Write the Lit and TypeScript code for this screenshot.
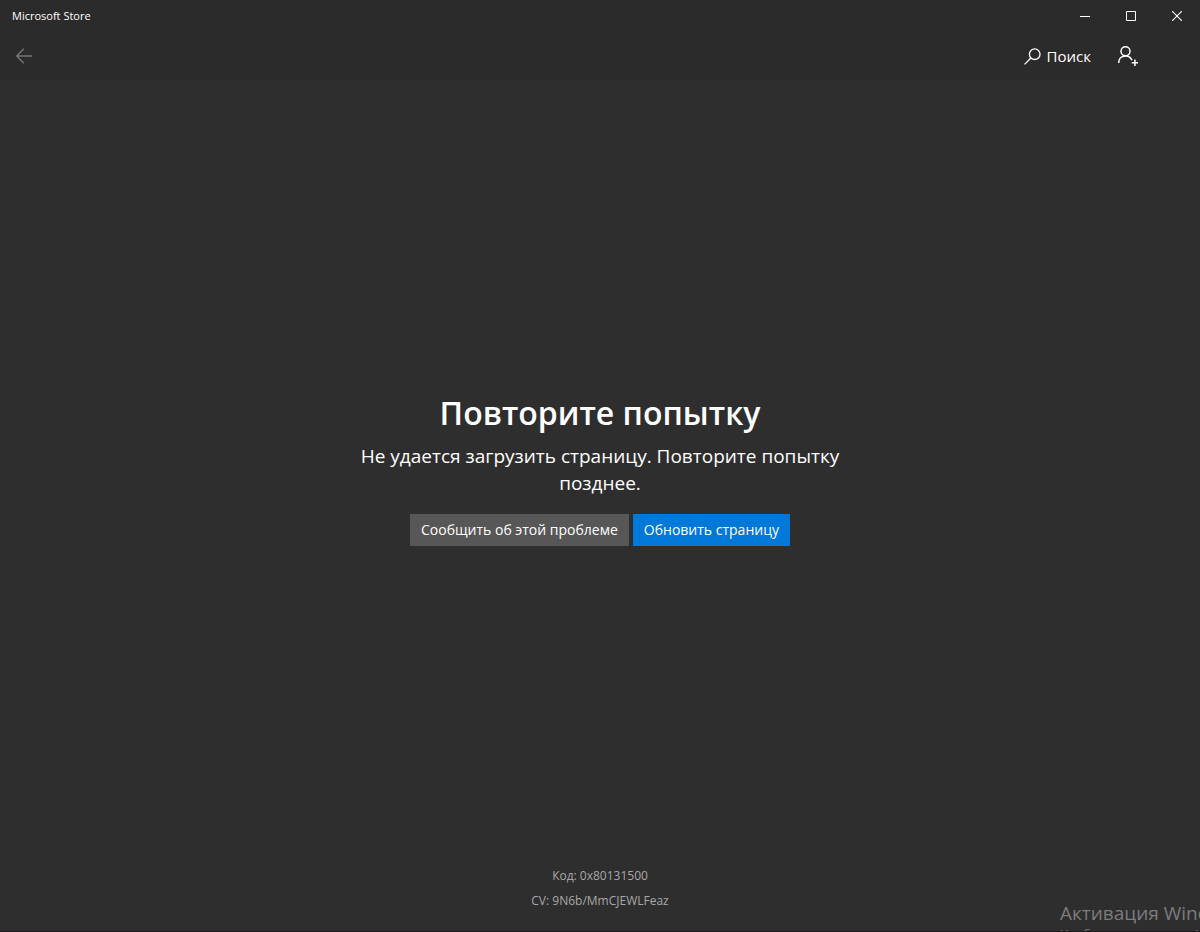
import { LitElement, html, css } from "lit";
import { customElement } from "lit/decorators.js";

@customElement("store-header")
class StoreHeader extends LitElement {
  static styles = css`
    :host {
      display: block;
      background: #2b2b2b;
    }
    .titlebar {
      display: flex;
      align-items: center;
      justify-content: space-between;
      height: 32px;
      padding-left: 12px;
      font-size: 11px;
      line-height: 16px;
    }
    .window-controls {
      display: flex;
    }
    .toolbar {
      display: flex;
      align-items: center;
      justify-content: space-between;
      height: 48px;
      padding-right: 48px;
    }
    .actions {
      display: flex;
      align-items: center;
    }
    button {
      display: flex;
      align-items: center;
      justify-content: center;
      margin: 0;
      padding: 0;
      border: 0;
      background: transparent;
      color: #fff;
      font: inherit;
    }
    svg {
      display: block;
      fill: none;
      stroke: currentColor;
    }
    .caption {
      width: 46px;
      height: 32px;
    }
    .icon {
      width: 48px;
      height: 48px;
    }
    .back {
      color: #767676;
    }
    .search {
      gap: 6px;
      height: 48px;
      padding: 0 13px;
      font-size: 15px;
      line-height: 20px;
    }
  `;

  render() {
    return html`
      <div class="titlebar">
        <span>Microsoft Store</span>
        <div class="window-controls">
          <button class="caption" aria-label="Свернуть">
            <svg width="10" height="10" viewBox="0 0 10 10"><path d="M0 5.5H10" /></svg>
          </button>
          <button class="caption" aria-label="Развернуть">
            <svg width="10" height="10" viewBox="0 0 10 10"><path d="M.5 .5H9.5V9.5H.5Z" /></svg>
          </button>
          <button class="caption" aria-label="Закрыть">
            <svg width="10" height="10" viewBox="0 0 10 10"><path d="M0 0L10 10M10 0L0 10" stroke-width="1.1" /></svg>
          </button>
        </div>
      </div>
      <div class="toolbar">
        <button class="icon back" aria-label="Назад">
          <svg width="16" height="16" viewBox="0 0 16 16"><path d="M16 8H.8M7.8 .8L.7 8L7.8 15.2" stroke-width="1.4" /></svg>
        </button>
        <div class="actions">
          <button class="search">
            <svg width="17" height="17" viewBox="0 0 17 17">
              <circle cx="10.7" cy="6.2" r="5.3" stroke-width="1.3" />
              <path d="M6.9 10L.6 16.4" stroke-width="1.3" />
            </svg>
            <span>Поиск</span>
          </button>
          <button class="icon" aria-label="Войти">
            <svg width="20" height="20" viewBox="0 0 20 20">
              <circle cx="7.5" cy="5.2" r="4.5" stroke-width="1.5" />
              <path d="M.7 17C.7 12.6 3.5 9.9 7.5 9.9C10.6 9.9 13 11.5 13.9 14.2" stroke-width="1.5" />
              <path d="M16.9 13.6V20M13.7 16.8H20" stroke-width="1.5" />
            </svg>
          </button>
        </div>
      </div>
    `;
  }
}

@customElement("app-root")
class AppRoot extends LitElement {
  static styles = css`
    :host {
      position: relative;
      display: flex;
      flex-direction: column;
      box-sizing: border-box;
      min-height: 100vh;
      overflow: hidden;
      border-bottom: 1px solid #1c1a1c;
      background: #2e2e2e;
      color: #fff;
      font-family: "Open Sans", "Noto Sans", sans-serif;
    }
    main {
      flex: 1;
      display: flex;
      flex-direction: column;
      align-items: center;
      justify-content: center;
      padding-bottom: 9px;
      text-align: center;
    }
    h1 {
      margin: 0;
      font-size: 32px;
      line-height: 48px;
      font-weight: 600;
    }
    .message {
      max-width: 480px;
      margin: 6px 0 17px;
      font-size: 19px;
      line-height: 27px;
    }
    .buttons {
      display: flex;
      gap: 4px;
    }
    .button {
      height: 32px;
      margin: 0;
      padding: 0 11px;
      border: 0;
      background: #575757;
      color: #fff;
      font: inherit;
      font-size: 14px;
      line-height: 20px;
      white-space: nowrap;
    }
    .primary {
      background: #0078d7;
    }
    footer {
      padding-bottom: 18px;
      color: #a8a8a8;
      font-size: 12px;
      line-height: 25px;
      text-align: center;
    }
    footer p {
      margin: 0;
    }
    .watermark {
      position: absolute;
      left: calc(100% - 140px);
      top: calc(100% - 31px);
      color: #7c7c7c;
      font-size: 19px;
      line-height: 26px;
      white-space: nowrap;
      pointer-events: none;
    }
    .watermark small {
      display: block;
      font-size: 13px;
      line-height: 16px;
    }
  `;

  render() {
    return html`
      <store-header></store-header>
      <main>
        <h1>Повторите попытку</h1>
        <p class="message">Не удается загрузить страницу. Повторите попытку позднее.</p>
        <div class="buttons">
          <button class="button">Сообщить об этой проблеме</button>
          <button class="button primary">Обновить страницу</button>
        </div>
      </main>
      <footer>
        <p>Код: 0x80131500</p>
        <p>CV: 9N6b/MmCJEWLFeaz</p>
      </footer>
      <div class="watermark">
        Активация Windows
        <small>Чтобы активировать Windows</small>
      </div>
    `;
  }
}
